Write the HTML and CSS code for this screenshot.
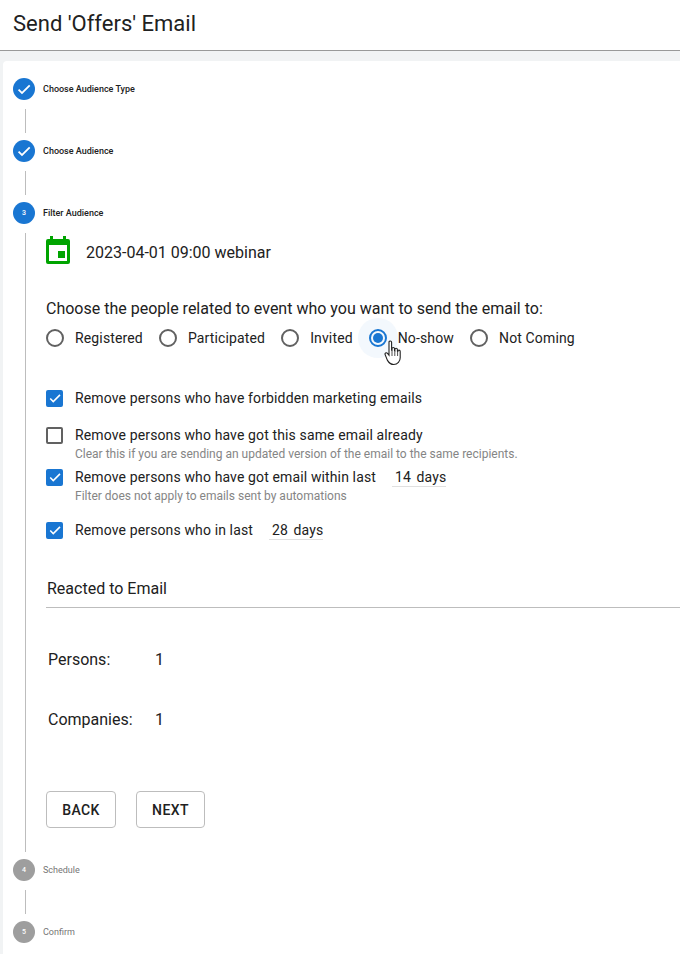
FILE: index.html
```html
<!DOCTYPE html>
<html lang="en">
<head>
<meta charset="utf-8">
<title>Send 'Offers' Email</title>
<link rel="stylesheet" href="styles.css">
</head>
<body>
<header class="page-header"><h1 class="page-title">Send 'Offers' Email</h1></header>
<main class="card">
  <div class="step-head">
    <span class="step-dot active"><svg class="check" viewBox="0 0 24 24"><path d="M9 16.2 4.8 12l-1.9 1.9L9 20 21.5 7.5l-1.9-1.9z"/></svg></span>
    <span class="step-label">Choose Audience Type</span>
  </div>
  <div class="connector"></div>
  <div class="step-head">
    <span class="step-dot active"><svg class="check" viewBox="0 0 24 24"><path d="M9 16.2 4.8 12l-1.9 1.9L9 20 21.5 7.5l-1.9-1.9z"/></svg></span>
    <span class="step-label">Choose Audience</span>
  </div>
  <div class="connector"></div>
  <div class="step-head">
    <span class="step-dot active">3</span>
    <span class="step-label">Filter Audience</span>
  </div>
  <section class="step-body">
    <div class="event-row">
      <svg class="cal-icon" viewBox="0 0 24 28"><path d="M4 0h3v3h10V0h3v3h2a2 2 0 0 1 2 2v21a2 2 0 0 1-2 2H2a2 2 0 0 1-2-2V5a2 2 0 0 1 2-2h2zM3 9v16h18V9z"/><rect x="12" y="15" width="7" height="7"/></svg>
      <span class="event-name">2023-04-01 09:00 webinar</span>
    </div>
    <p class="question">Choose the people related to event who you want to send the email to:</p>
    <div class="radio-row">
      <label class="radio"><span class="radio-mark"></span>Registered</label>
      <label class="radio"><span class="radio-mark"></span>Participated</label>
      <label class="radio"><span class="radio-mark"></span>Invited</label>
      <label class="radio selected"><span class="ripple"></span><span class="radio-mark"></span>No-show
        <svg class="cursor" viewBox="0 0 18 26"><path d="M5 2.200c0-1.600 2.600-1.600 2.600 0v8l.4.100V8.600c0-1.500 2.500-1.500 2.500 0v2l.4.100V9.400c0-1.500 2.500-1.500 2.500 0v1.700l.4.100c0-1.500 2.400-1.400 2.400.2v6.300c0 3.500-2.500 6.800-6.500 6.800-3.500 0-5-2-6.400-4.400L1.300 15c-1-1.700 1-3 2.200-1.600L5 15.200z"/><path class="cursor-line" d="M8 11v5M10.800 11v5M13.600 11v5"/></svg>
      </label>
      <label class="radio"><span class="radio-mark"></span>Not Coming</label>
    </div>
    <div class="option first">
      <span class="box on"><svg class="check" viewBox="0 0 24 24"><path d="M9 16.2 4.800 12l-1.900 1.900L9 20 21.500 7.500l-1.900-1.900z"/></svg></span>
      <span class="option-text">Remove persons who have forbidden marketing emails</span>
    </div>
    <div class="option second">
      <span class="box"></span>
      <span class="option-text">Remove persons who have got this same email already</span>
    </div>
    <p class="hint">Clear this if you are sending an updated version of the email to the same recipients.</p>
    <div class="option third">
      <span class="box on"><svg class="check" viewBox="0 0 24 24"><path d="M9 16.2 4.800 12l-1.900 1.900L9 20 21.500 7.500l-1.900-1.900z"/></svg></span>
      <span class="option-text">Remove persons who have got email within last</span>
      <span class="days wide"><span class="num">14</span> days</span>
    </div>
    <p class="hint">Filter does not apply to emails sent by automations</p>
    <div class="option fourth">
      <span class="box on"><svg class="check" viewBox="0 0 24 24"><path d="M9 16.2 4.800 12l-1.900 1.900L9 20 21.500 7.500l-1.900-1.900z"/></svg></span>
      <span class="option-text">Remove persons who in last</span>
      <span class="days"><span class="num">28</span> days</span>
    </div>
    <h2 class="section-title">Reacted to Email</h2>
    <dl class="stats">
      <div class="stat"><dt>Persons:</dt><dd>1</dd></div>
      <div class="stat"><dt>Companies:</dt><dd>1</dd></div>
    </dl>
    <div class="actions">
      <button class="btn back">BACK</button>
      <button class="btn next">NEXT</button>
    </div>
  </section>
  <div class="step-head">
    <span class="step-dot">4</span>
    <span class="step-label muted">Schedule</span>
  </div>
  <div class="connector"></div>
  <div class="step-head">
    <span class="step-dot">5</span>
    <span class="step-label muted">Confirm</span>
  </div>
</main>
</body>
</html>
```
FILE: styles.css
```css
* { box-sizing: border-box; }
html, body { margin: 0; height: 954px; overflow: hidden; }
body { background: #f1f3f4; font-family: Roboto, "Liberation Sans", sans-serif; color: #212121; }
.page-header { height: 51px; background: #fff; border-bottom: 1px solid #999; padding: 11px 0 0 13px; }
.page-title { margin: 0; font-size: 22px; line-height: 26px; font-weight: 400; }
.card { margin: 10px 0 0 3px; background: #fff; border-radius: 4px 0 0 0; height: 893px; padding: 17px 0 0 10px; }
.step-head { display: flex; align-items: flex-start; height: 22px; }
.step-dot { width: 22px; height: 22px; border-radius: 50%; background: #9e9e9e; color: #fff; font-size: 7px; font-weight: 500; display: flex; align-items: center; justify-content: center; flex: none; }
.step-dot.active { background: #1976d2; }
.step-dot .check { width: 16px; height: 16px; fill: #fff; }
.step-label { margin-left: 8px; font-size: 9px; line-height: 22px; font-weight: 500; height: 22px; }
.step-label.muted { color: #757575; font-weight: 400; }
.connector { width: 1px; height: 24px; background: #bdbdbd; margin: 9px 0 7px 12px; }
.step-body { margin: 9px 0 7px 12px; border-left: 1px solid #bdbdbd; height: 619px; padding: 3px 0 0 20px; }
.event-row { display: flex; align-items: center; height: 28px; }
.cal-icon { width: 24px; height: 28px; fill: #00a400; flex: none; }
.event-name { margin-left: 16px; font-size: 16px; padding-top: 4px; }
.question { margin: 35px 0 0; font-size: 16px; line-height: 20px; }
.radio-row { display: flex; margin-top: 9px; height: 20px; }
.radio { position: relative; display: flex; align-items: center; font-size: 14px; letter-spacing: .14px; margin-right: 16px; white-space: nowrap; }
.radio-mark { position: relative; width: 18px; height: 18px; border: 2px solid #616161; border-radius: 50%; margin-right: 11px; flex: none; }
.selected .radio-mark { border-color: #1976d2; }
.selected .radio-mark::after { content: ""; position: absolute; left: 2px; top: 2px; width: 10px; height: 10px; border-radius: 50%; background: #1976d2; }
.ripple { position: absolute; left: -11px; top: -10px; width: 40px; height: 40px; border-radius: 50%; background: #f3f8fd; }
.cursor { position: absolute; left: 15px; top: 12px; width: 18px; height: 26px; fill: #fff; stroke: #222; stroke-width: 1.1; }
.cursor-line { fill: none; stroke-width: .8; }
.option { display: flex; align-items: center; height: 20px; font-size: 14px; letter-spacing: .13px; }
.option.first { margin-top: 40px; }
.option.second { margin-top: 17px; }
.option.third { margin-top: 5px; }
.option.fourth { margin-top: 16px; }
.box { width: 17px; height: 17px; border: 2px solid #616161; border-radius: 2px; margin-right: 12px; flex: none; display: flex; align-items: center; justify-content: center; }
.box.on { background: #1976d2; border-color: #1976d2; }
.box .check { width: 14px; height: 14px; fill: #fff; flex: none; }
.hint { margin: 2px 0 0 29px; font-size: 12px; line-height: 15px; color: #858585; }
.days { margin-left: 16px; border-bottom: 1px solid #e0e0e0; height: 20px; line-height: 20px; white-space: nowrap; }
.num { display: inline-block; padding-left: 3px; margin-right: 2px; }
.section-title { margin: 39px 0 0 1px; font-size: 16px; line-height: 20px; font-weight: 400; }
.stats { margin: 8px 0 0; border-top: 1px solid #bdbdbd; padding-top: 42px; }
.stat { display: flex; height: 20px; font-size: 16px; line-height: 20px; margin: 0 0 40px 2px; }
.stat dt { width: 107px; }
.stat dd { margin: 0; }
.actions { display: flex; gap: 20px; margin-top: 61px; }
.btn { height: 37px; border: 1px solid #bdbdbd; border-radius: 4px; background: #fff; font: 500 14px Roboto, sans-serif; letter-spacing: .4px; color: #212121; padding: 0; }
.btn.back { width: 70px; }
.btn.next { width: 69px; }
```
